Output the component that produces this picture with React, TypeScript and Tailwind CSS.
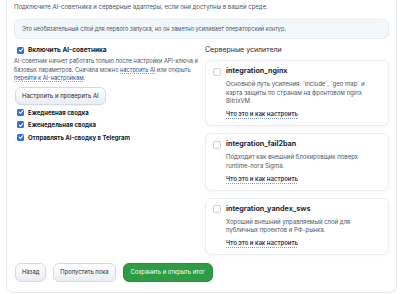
import React from "react";

function CheckOn() {
  return (
    <span className="flex h-[7px] w-[7px] shrink-0 items-center justify-center rounded-[1.5px] bg-[#2f6fe0]">
      <svg viewBox="0 0 10 10" className="h-[6px] w-[6px]">
        <path d="M2 5.2 4.1 7.2 8 2.8" fill="none" stroke="#fff" strokeWidth="1.8" strokeLinecap="round" strokeLinejoin="round" />
      </svg>
    </span>
  );
}

function CheckOff() {
  return <span className="mt-[1.5px] h-[8px] w-[8px] shrink-0 rounded-[2px] border border-[#c9d0d8] bg-white" />;
}

const helpLink = "font-semibold text-[#1f3a5f] underline decoration-dotted decoration-[#7a9cc6] underline-offset-[1.5px]";
const inlineLink = "text-[#1f4f8a] underline decoration-dotted decoration-[#7a9cc6] underline-offset-[1px]";

function IntegrationCard({ name, desc }: { name: string; desc: string }) {
  return (
    <div className="rounded-[6px] border border-[#e8edf2] bg-white px-[7px] pb-[7px] pt-[5px] shadow-[0_1px_2px_rgba(0,0,0,0.03)]">
      <div className="flex items-start gap-[5px]">
        <CheckOff />
        <div className="flex-1">
          <div className="text-[7.2px] font-bold leading-[10px] text-[#1f2937]">{name}</div>
          <p className="mt-[4px] text-[6px] leading-[8.5px] text-[#4b5563]">{desc}</p>
          <div className="mt-[4.5px] text-[6px] leading-[8px]">
            <span className={helpLink}>Что это и как настроить</span>
          </div>
        </div>
      </div>
    </div>
  );
}

export default function App() {
  return (
    <div className="h-[294px] w-[403px] overflow-hidden bg-white font-['Inter',sans-serif]">
      <div className="mx-[6px] h-[293px] rounded-b-[8px] border-x border-b border-[#e6e9ee] px-[7px] pt-[3px]">
        <p className="text-[6px] leading-[8px] text-[#4b5563]">
          Подключите AI-советника и серверные адаптеры, если они доступны в вашей среде.
        </p>

        <div className="mt-[8px] flex h-[20px] items-center rounded-[6px] border border-[#e3edf7] bg-[#f3f8fd] px-[7px] text-[5.6px] text-[#4b5563]">
          Это необязательный слой для первого запуска, но он заметно усиливает операторский контур.
        </div>

        <div className="mt-[5px] grid grid-cols-[186px_1fr] gap-[5px]">
          <div>
            <label className="flex items-center gap-[4px] pl-[3px] pt-[2px]">
              <CheckOn />
              <span className="text-[6.5px] font-bold leading-[8px] text-[#111827]">Включить AI-советника</span>
            </label>
            <p className="mt-[3px] text-[5.6px] leading-[8.5px] text-[#4b5563]">
              AI-советник начнет работать только после настройки API-ключа и базовых параметров. Сначала можно{" "}
              <span className={inlineLink}>настроить AI</span> или открыть{" "}
              <span className={inlineLink}>перейти к AI-настройкам</span>.
            </p>
            <button className="ml-[1px] mt-[4px] flex h-[18px] items-center rounded-[6px] border border-[#d3dae2] bg-gradient-to-b from-white to-[#e9eef3] px-[6px] text-[6px] text-[#1f2937] shadow-[0_1px_1px_rgba(0,0,0,0.05)]">
              Настроить и проверить AI
            </button>
            <div className="mt-[4px] flex flex-col gap-[5.5px] pl-[3px]">
              {["Ежедневная сводка", "Еженедельная сводка", "Отправлять AI-сводку в Telegram"].map((t) => (
                <label key={t} className="flex items-center gap-[4px]">
                  <CheckOn />
                  <span className="text-[6px] font-bold leading-[7px] text-[#111827]">{t}</span>
                </label>
              ))}
            </div>
          </div>

          <div>
            <div className="mt-[1px] text-[7px] leading-[10px] text-[#1f2937]">Серверные усилители</div>
            <div className="mt-[5px] flex flex-col gap-[7px]">
              <IntegrationCard
                name="integration_nginx"
                desc="Основной путь усиления: `include`, `geo map` и карта защиты по странам на фронтовом nginx BitrixVM."
              />
              <IntegrationCard
                name="integration_fail2ban"
                desc="Подходит как внешний блокировщик поверх runtime-лога Sigma."
              />
              <IntegrationCard
                name="integration_yandex_sws"
                desc="Хороший внешний управляемый слой для публичных проектов и РФ-рынка."
              />
            </div>
          </div>
        </div>

        <div className="mt-[8px] flex gap-[7px] pl-[1px]">
          <button className="flex h-[19px] items-center rounded-[6px] border border-[#d3dae2] bg-gradient-to-b from-white to-[#e9eef3] px-[6px] text-[5.8px] text-[#1f2937]">
            Назад
          </button>
          <button className="flex h-[19px] items-center rounded-[6px] border border-[#d3dae2] bg-gradient-to-b from-white to-[#e9eef3] px-[6px] text-[5.8px] text-[#1f2937]">
            Пропустить пока
          </button>
          <button className="flex h-[19px] items-center rounded-[6px] border border-[#2a8f3f] bg-[#2e9b45] px-[7px] text-[5.8px] text-white">
            Сохранить и открыть итог
          </button>
        </div>
      </div>
    </div>
  );
}
